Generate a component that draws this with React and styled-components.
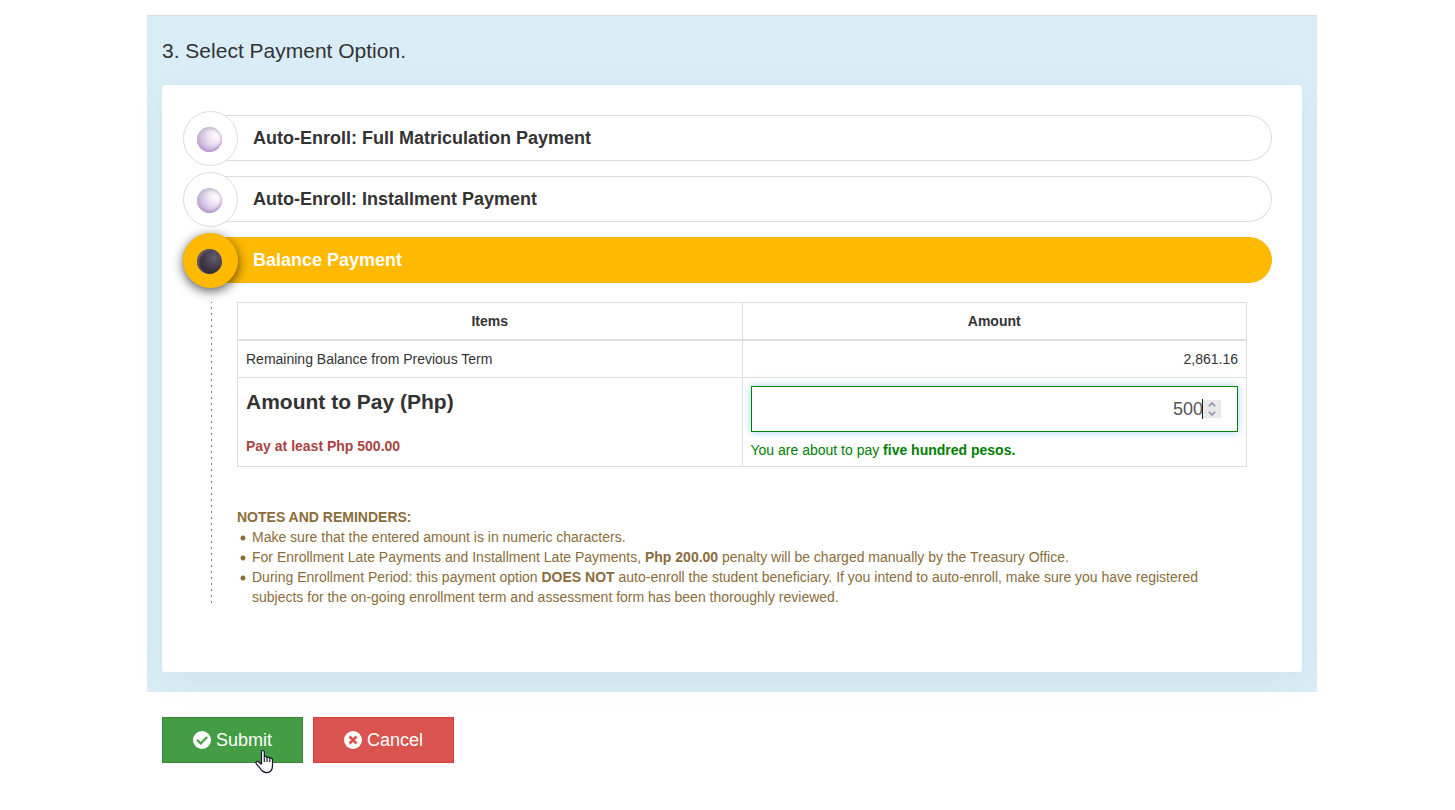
import React, { useState } from "react";
import styled, { createGlobalStyle } from "styled-components";

const GlobalStyle = createGlobalStyle`
  *, *::before, *::after { box-sizing: border-box; }
  body {
    margin: 0;
    background: #fff;
    color: #333;
    font: 14px/20px "Liberation Sans", Arial, sans-serif;
  }
`;

const Page = styled.form`
  padding: 15px 0 40px 9px;
`;

const Container = styled.div`
  max-width: 1170px;
  margin: 0 auto;
`;

const Panel = styled.section`
  padding: 23px 15px 20px;
  border-top: 1px solid #ddd;
  background: #d9edf7;
`;

const Heading = styled.h2`
  margin: 0 0 22px;
  font-size: 21px;
  line-height: 24px;
  font-weight: 400;
`;

const Card = styled.div`
  padding: 30px 30px 65px 21px;
  border-radius: 3px;
  background: #fff;
  box-shadow: 0 10px 40px rgba(0, 0, 0, 0.04);
`;

const Options = styled.div`
  display: flex;
  flex-direction: column;
  gap: 15px;
`;

const Option = styled.label`
  display: flex;
  align-items: center;
  gap: 15px;
  height: 46px;
  border: 1px solid ${(p) => (p.$active ? "#ffb900" : "#ddd")};
  border-left: 0;
  border-radius: 23px;
  background: ${(p) => (p.$active ? "#ffb900" : "#fff")};
  color: ${(p) => (p.$active ? "#fff" : "#333")};
  font-size: 18px;
  font-weight: 700;
  cursor: pointer;
`;

const Knob = styled.span`
  display: grid;
  place-items: center;
  flex: none;
  width: 55px;
  height: 55px;
  padding: 2px 2px 0 0;
  border: 1px solid ${(p) => (p.$active ? "#ffb900" : "#ddd")};
  border-radius: 50%;
  background: ${(p) => (p.$active ? "#ffb900" : "#fff")};
  box-shadow: ${(p) => (p.$active ? "0 3px 11px rgba(0, 0, 0, 0.65)" : "none")};
`;

const Ball = styled.input`
  appearance: none;
  width: 25px;
  height: 25px;
  margin: 0;
  border-radius: 50%;
  background: ${(p) =>
    p.checked
      ? "radial-gradient(circle at 68% 35%, #655e6b 0%, #43394b 45%, #2b2233 85%)"
      : "radial-gradient(circle at 75% 35%, #fff 0%, #eee4f4 30%, #c9b3dc 70%, #b08fd0 100%)"};
  box-shadow: ${(p) =>
    p.checked
      ? "inset 2px 1px 2px #6a626e"
      : "inset 1px 2px 3px #c3bfc8, inset 0 -2px 3px #b595d2"};
`;

const Details = styled.div`
  display: flex;
  gap: 25px;
  padding: 19px 25px 0 28px;
`;

const Guide = styled.div`
  flex: none;
  width: 1px;
  background: repeating-linear-gradient(#777 0 1px, transparent 1px 5px, #777 5px 6px);
`;

const Body = styled.div`
  flex: 1;
  min-width: 0;
`;

const Table = styled.table`
  width: 100%;
  margin-bottom: 40px;
  border: 1px solid #ddd;
  border-collapse: collapse;
  table-layout: fixed;
`;

const Th = styled.th`
  padding: 8px;
  border: 1px solid #ddd;
  border-bottom-width: 2px;
`;

const Td = styled.td`
  padding: ${(p) => (p.$entry ? "8px 8px 6px" : "8px")};
  border: 1px solid #ddd;
  text-align: ${(p) => p.$align || "left"};
  vertical-align: top;
`;

const AmountLabel = styled.label`
  display: block;
  margin: 4px 0 22px;
  font-size: 21px;
  line-height: 24px;
  font-weight: 700;
`;

const Minimum = styled.div`
  color: #a94442;
  font-weight: 700;
`;

const Field = styled.div`
  display: flex;
  align-items: center;
  height: 46px;
  padding: 0 16px;
  border: 1px solid #008000;
  background: #fff;
  box-shadow: 0 0 8px rgba(102, 175, 233, 0.6);
`;

const AmountInput = styled.input`
  flex: 1;
  min-width: 0;
  padding: 0;
  border: 0;
  outline: 0;
  background: transparent;
  color: #555;
  font: 18px/24px "Liberation Sans", Arial, sans-serif;
  text-align: right;
`;

const Caret = styled.span`
  width: 1px;
  height: 20px;
  margin-left: -1px;
  background: #222;
`;

const Stepper = styled.div`
  display: flex;
  flex-direction: column;
  width: 18px;
  height: 18px;
`;

const Step = styled.button`
  display: grid;
  place-items: center;
  flex: 1;
  min-height: 0;
  padding: 0;
  border: 0;
  background: #e9e9ed;
`;

const InWords = styled.div`
  margin-top: 8px;
  color: #008000;
`;

const Notes = styled.div`
  color: #8a6d3b;
`;

const NoteList = styled.ul`
  margin: 0;
  padding: 0;
  list-style: none;
`;

const Note = styled.li`
  padding-left: 15px;
  background: radial-gradient(circle, #8a6d3b 2px, transparent 3px) 3px 8px / 6px 6px no-repeat;
`;

const Actions = styled.div`
  display: flex;
  gap: 10px;
  padding: 25px 15px 0;
`;

const Action = styled.button`
  position: relative;
  display: flex;
  align-items: center;
  justify-content: center;
  gap: 5px;
  width: 141px;
  height: 46px;
  padding: 0;
  border: 1px solid ${(p) => (p.$danger ? "#d43f3a" : "#398439")};
  background: ${(p) => (p.$danger ? "#d9534f" : "#449d44")};
  color: #fff;
  font: 18px/24px "Liberation Sans", Arial, sans-serif;
  cursor: pointer;
`;

const Pointer = styled.svg`
  position: absolute;
  left: 92px;
  top: 31px;
`;

const choices = [
  "Auto-Enroll: Full Matriculation Payment",
  "Auto-Enroll: Installment Payment",
  "Balance Payment",
];

function Chevron({ down }) {
  return (
    <svg width="8" height="5" viewBox="0 0 8 5" fill="none" stroke="#8f8f9d" strokeWidth="1.5" aria-hidden="true">
      <path d={down ? "M.8.7 4 3.9 7.2.7" : "M.8 4.3 4 1.1 7.2 4.3"} />
    </svg>
  );
}

function StatusIcon({ cross }) {
  return (
    <svg width="18" height="18" viewBox="0 0 18 18" aria-hidden="true">
      <circle cx="9" cy="9" r="9" fill="#fff" />
      {cross ? (
        <path d="M5.5 5.5l7 7M12.5 5.5l-7 7" stroke="#d9534f" strokeWidth="2.7" />
      ) : (
        <path d="M4 8.8l3.8 3.7 6.4-6.5" fill="none" stroke="#449d44" strokeWidth="2" />
      )}
    </svg>
  );
}

export default function App() {
  const [selected, setSelected] = useState(2);
  const [amount, setAmount] = useState("500");
  const bump = (by) => setAmount(String(Math.max(500, Number(amount) + by)));

  return (
    <>
      <GlobalStyle />
      <Page onSubmit={(e) => e.preventDefault()}>
        <Container>
          <Panel>
            <Heading>3. Select Payment Option.</Heading>
            <Card>
              <Options>
                {choices.map((name, i) => (
                  <Option key={name} $active={i === selected}>
                    <Knob $active={i === selected}>
                      <Ball type="radio" name="option" checked={i === selected} onChange={() => setSelected(i)} />
                    </Knob>
                    {name}
                  </Option>
                ))}
              </Options>
              <Details>
                <Guide />
                <Body>
                  <Table>
                    <thead>
                      <tr>
                        <Th>Items</Th>
                        <Th>Amount</Th>
                      </tr>
                    </thead>
                    <tbody>
                      <tr>
                        <Td>Remaining Balance from Previous Term</Td>
                        <Td $align="right">2,861.16</Td>
                      </tr>
                      <tr>
                        <Td $entry>
                          <AmountLabel htmlFor="amount">Amount to Pay (Php)</AmountLabel>
                          <Minimum>Pay at least Php 500.00</Minimum>
                        </Td>
                        <Td $entry>
                          <Field>
                            <AmountInput
                              id="amount"
                              inputMode="numeric"
                              value={amount}
                              onChange={(e) => setAmount(e.target.value)}
                            />
                            <Caret />
                            <Stepper>
                              <Step type="button" aria-label="Increase" onClick={() => bump(1)}>
                                <Chevron />
                              </Step>
                              <Step type="button" aria-label="Decrease" onClick={() => bump(-1)}>
                                <Chevron down />
                              </Step>
                            </Stepper>
                          </Field>
                          <InWords>
                            You are about to pay <strong>five hundred pesos.</strong>
                          </InWords>
                        </Td>
                      </tr>
                    </tbody>
                  </Table>
                  <Notes>
                    <strong>NOTES AND REMINDERS:</strong>
                    <NoteList>
                      <Note>Make sure that the entered amount is in numeric characters.</Note>
                      <Note>
                        For Enrollment Late Payments and Installment Late Payments, <strong>Php 200.00</strong> penalty
                        will be charged manually by the Treasury Office.
                      </Note>
                      <Note>
                        During Enrollment Period: this payment option <strong>DOES NOT</strong> auto-enroll the student
                        beneficiary. If you intend to auto-enroll, make sure you have registered subjects for the
                        on-going enrollment term and assessment form has been thoroughly reviewed.
                      </Note>
                    </NoteList>
                  </Notes>
                </Body>
              </Details>
            </Card>
          </Panel>
          <Actions>
            <Action type="submit">
              <StatusIcon />
              Submit
              <Pointer width="20" height="25" viewBox="0 0 20 25" aria-hidden="true">
                <path
                  d="M6.5 15V3.2C6.5.9 9.3.9 9.3 3.2V8.5C9.5 6.9 12 7.1 12 9 12.4 7.5 14.7 7.9 14.8 9.7 15.3 8.5 17.5 8.9 17.5 10.8V16.5C17.5 20.5 15.6 23.6 11.8 23.6 8 23.6 6.4 21.8 4.8 18.9L1.2 14.6C.2 12.9 2.2 11.7 3.6 12.8L6.5 15.5"
                  fill="#fff"
                  stroke="#14142a"
                  strokeWidth="1.2"
                />
                <path d="M9.3 8.5V13M12 9V13M14.8 9.7V13" stroke="#14142a" strokeWidth="1.2" />
              </Pointer>
            </Action>
            <Action type="button" $danger>
              <StatusIcon cross />
              Cancel
            </Action>
          </Actions>
        </Container>
      </Page>
    </>
  );
}
